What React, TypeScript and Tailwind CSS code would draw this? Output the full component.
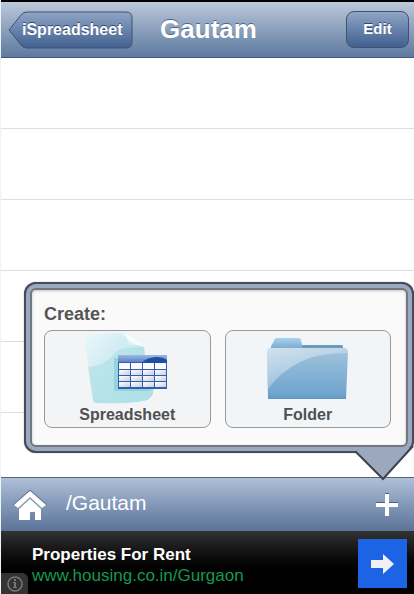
const ROWS = [1, 2, 3, 4, 5];

function SpreadsheetIcon() {
    return (
        <svg width="88" height="74" viewBox="0 0 88 74" aria-hidden="true">
            <defs>
                <linearGradient id="page" x1="0" y1="0" x2="1" y2="1">
                    <stop offset="0" stopColor="#eaf7fa" />
                    <stop offset="0.45" stopColor="#c9ebf0" />
                    <stop offset="1" stopColor="#b4e3ea" />
                </linearGradient>
                <linearGradient id="curl" x1="0" y1="1" x2="1" y2="0">
                    <stop offset="0" stopColor="#b5dfe8" />
                    <stop offset="0.5" stopColor="#fbfeff" />
                    <stop offset="1" stopColor="#cbe9f0" />
                </linearGradient>
                <linearGradient id="band" x1="0" y1="0" x2="0" y2="1">
                    <stop offset="0" stopColor="#9db9e2" />
                    <stop offset="1" stopColor="#5b83c6" />
                </linearGradient>
                <linearGradient id="cells" x1="0" y1="0" x2="1" y2="1">
                    <stop offset="0" stopColor="#ffffff" />
                    <stop offset="1" stopColor="#c9cfdf" />
                </linearGradient>
            </defs>
            <path
                d="M5 4 Q23 2 42 2 Q56 8 61 16 Q63 40 70 55 Q72 63 66 68 Q57 73 14 72 Q11 72 10 69 L2 9 Q1 5 5 4Z"
                fill="url(#page)"
            />
            <path
                d="M5 36 Q20 36 30 24 Q34 19 42 17 L61 16 Q63 40 70 55 Q72 63 66 68 Q57 73 14 72 Q11 72 10 69Z"
                fill="#a5dce4"
                opacity="0.5"
            />
            <path d="M39 2 Q54 5 61 16 Q52 12 44 15 Q47 7 39 2Z" fill="url(#curl)" />
            <path d="M31 27 H36 V57 H70 Q68 60 63 60 H31Z" fill="#82cbdc" opacity="0.65" />
            <rect x="35" y="24" width="49" height="34" fill="#2f5fae" />
            <rect x="35" y="24" width="49" height="7" fill="url(#band)" />
            <path d="M59 32 Q62 27 73 26 Q80 26 84 29 V32Z" fill="#1d4fa4" />
            {[32, 39, 45, 51].map((y) =>
                [36, 48, 60, 72].map((x) => (
                    <rect
                        key={`${x}-${y}`}
                        x={x}
                        y={y}
                        width="11"
                        height={y === 32 ? 6 : 5}
                        fill={y === 32 ? "#f8faff" : "url(#cells)"}
                    />
                ))
            )}
        </svg>
    );
}

function FolderIcon() {
    return (
        <svg width="84" height="74" viewBox="0 0 84 74" aria-hidden="true">
            <defs>
                <linearGradient id="tab" x1="0" y1="0" x2="0" y2="1">
                    <stop offset="0" stopColor="#a9d2f2" />
                    <stop offset="1" stopColor="#79a9cc" />
                </linearGradient>
                <linearGradient id="front" x1="0" y1="0" x2="0" y2="1">
                    <stop offset="0" stopColor="#a3c4dc" />
                    <stop offset="0.9" stopColor="#6ea5cf" />
                    <stop offset="1" stopColor="#6496bb" />
                </linearGradient>
                <linearGradient id="gloss" x1="0" y1="0" x2="1" y2="1">
                    <stop offset="0" stopColor="#ffffff" stopOpacity="0.5" />
                    <stop offset="1" stopColor="#ffffff" stopOpacity="0.1" />
                </linearGradient>
            </defs>
            <path
                d="M5 18 V15 L8 10 Q8 7 11 7 H32 Q35 7 35 9 L36 14 H75 Q77 14 77 16 V18Z"
                fill="url(#tab)"
            />
            <path d="M36 14 H75 Q77 14 77 16 V18 H36Z" fill="#6d9bbd" />
            <path d="M1 20 L3 17 H80 L82 20 L80 68 H2Z" fill="url(#front)" />
            <path
                d="M1 20 L3 17 H80 L82 20 V22 Q52 22 34 31 Q14 41 2 58Z"
                fill="url(#gloss)"
            />
        </svg>
    );
}

function CreatePopover() {
    return (
        <div className="absolute bottom-6 left-[23px] right-0">
            <div className="rounded-xl border-2 border-[#444b5a] bg-[#9ca8bd] p-1 shadow-[0_0_1px_#555]">
                <div className="rounded-md border-2 border-[#73767f] bg-[#fafafa] pt-3 pr-[15px] pb-[17px] pl-3 shadow-[inset_0_1px_3px_#c4c4c4]">
                    <h2 className="text-[18px] leading-6 font-bold text-[#555]">
                        Create:
                    </h2>
                    <div className="mt-1 grid grid-cols-2 gap-[14px]">
                        <button
                            type="button"
                            className="flex flex-col items-center rounded-lg border border-[#999] bg-[#f3f4f6] pb-[2px]"
                        >
                            <SpreadsheetIcon />
                            <span className="text-[16px] leading-5 font-bold text-[#505050]">
                                Spreadsheet
                            </span>
                        </button>
                        <button
                            type="button"
                            className="flex flex-col items-center rounded-lg border border-[#999] bg-[#f2f5f8] pb-[2px]"
                        >
                            <FolderIcon />
                            <span className="text-[16px] leading-5 font-bold text-[#505050]">
                                Folder
                            </span>
                        </button>
                    </div>
                </div>
            </div>
            <svg
                className="absolute right-0 -bottom-7"
                width="62"
                height="36"
                viewBox="0 0 62 36"
                aria-hidden="true"
            >
                <path d="M3 6 L5 3 H59 V2 L31 34Z" fill="#9ca8bd" />
                <path
                    d="M3 7 H4 L31 34 L61 1"
                    fill="none"
                    stroke="#3c434f"
                    strokeWidth="2"
                />
            </svg>
        </div>
    );
}

export default function App() {
    return (
        <div className="flex min-h-screen flex-col border-l border-[#edf3f7] bg-white font-['Liberation_Sans',Arial,sans-serif]">
            <header className="grid h-[58px] grid-cols-[1fr_auto_1fr] items-center border-t-2 border-b border-t-black border-b-[#3f5a80] bg-linear-to-b from-[#bcc8da] to-[#5d7a9f] pr-[5px] pl-[7px]">
                <button
                    type="button"
                    className="relative h-[38px] w-[125px] pl-[14px] text-left text-[16px] font-bold text-white text-shadow-[0_-1px_0_#34496a]"
                >
                    <svg
                        className="absolute inset-0"
                        width="125"
                        height="38"
                        viewBox="0 0 125 38"
                        aria-hidden="true"
                    >
                        <defs>
                            <linearGradient id="back" x1="0" y1="0" x2="0" y2="1">
                                <stop offset="0" stopColor="#8fa5c4" />
                                <stop offset="1" stopColor="#416091" />
                            </linearGradient>
                        </defs>
                        <path
                            d="M1 19 L13 4 Q15 1 19 1 H118 Q124 1 124 7 V31 Q124 37 118 37 H19 Q15 37 13 34Z"
                            fill="url(#back)"
                            stroke="#405270"
                            strokeWidth="1"
                        />
                    </svg>
                    <span className="relative">iSpreadsheet</span>
                </button>
                <h1 className="text-[26px] font-bold text-white text-shadow-[0_-1px_0_#55657f]">
                    Gautam
                </h1>
                <button
                    type="button"
                    className="h-[37px] w-[63px] justify-self-end rounded-lg border border-[#405270] bg-linear-to-b from-[#8fa5c4] to-[#416091] text-[15px] font-bold text-white text-shadow-[0_-1px_0_#34496a]"
                >
                    Edit
                </button>
            </header>

            <main className="relative flex-1">
                <ul className="pb-16">
                    {ROWS.map((row) => (
                        <li key={row} className="h-[71px] border-b border-[#dedede]" />
                    ))}
                </ul>
                <CreatePopover />
            </main>

            <nav className="flex h-[54px] items-center border-t border-[#56657a] bg-linear-to-b from-[#afc0d8] to-[#5a7398] pr-4 pl-3">
                <button type="button" aria-label="Home">
                    <svg width="34" height="32" viewBox="0 0 34 32" aria-hidden="true">
                        <path d="M0 16 L17 1 L34 16" fill="none" stroke="#5f6f86" strokeWidth="1" />
                        <path d="M17 2 L33 16 L29 19 L17 8 L5 19 L1 16Z" fill="#fff" />
                        <path d="M17 10 L28 20 V31 H22 V23 H17 V31 H6 V20Z" fill="#fff" />
                    </svg>
                </button>
                <span className="flex-1 pb-1 pl-[19px] text-[21px] text-white">
                    /Gautam
                </span>
                <button type="button" aria-label="Add">
                    <svg width="22" height="23" viewBox="0 0 22 23" aria-hidden="true">
                        <path d="M0 9 H9 V0 H13 V9 H22 V10 H0Z" fill="#4d6180" />
                        <path d="M9 1 H13 V10 H22 V14 H13 V23 H9 V14 H0 V10 H9Z" fill="#fff" />
                    </svg>
                </button>
            </nav>

            <aside className="relative flex h-[63px] items-center justify-between bg-linear-to-b from-[#333] to-black to-80% pr-[7px] pl-[31px]">
                <div className="pt-1 text-[17px] leading-[21px]">
                    <p className="font-bold text-white">Properties For Rent</p>
                    <a href="#ad" className="text-[#159a50]">
                        www.housing.co.in/Gurgaon
                    </a>
                </div>
                <button
                    type="button"
                    aria-label="Open ad"
                    className="mt-[2px] flex size-[49px] items-center justify-center bg-[#1d63e6]"
                >
                    <svg width="24" height="20" viewBox="0 0 24 20" aria-hidden="true">
                        <path d="M0 6 H12 V0 L23 10 L12 20 V14 H0Z" fill="#f0f0f2" />
                    </svg>
                </button>
                <button
                    type="button"
                    aria-label="Ad info"
                    className="absolute bottom-0 left-0 flex h-[21px] w-[27px] items-center justify-center rounded-tr-md bg-[#333]"
                >
                    <svg width="16" height="16" viewBox="0 0 16 16" aria-hidden="true">
                        <circle cx="8" cy="8" r="7" fill="none" stroke="#777" strokeWidth="1.5" />
                        <path d="M7 3 H9 V5 H7Z M6 6 H9 V11 H10 V12 H6 V11 H7 V7 H6Z" fill="#777" />
                    </svg>
                </button>
            </aside>
        </div>
    );
}
